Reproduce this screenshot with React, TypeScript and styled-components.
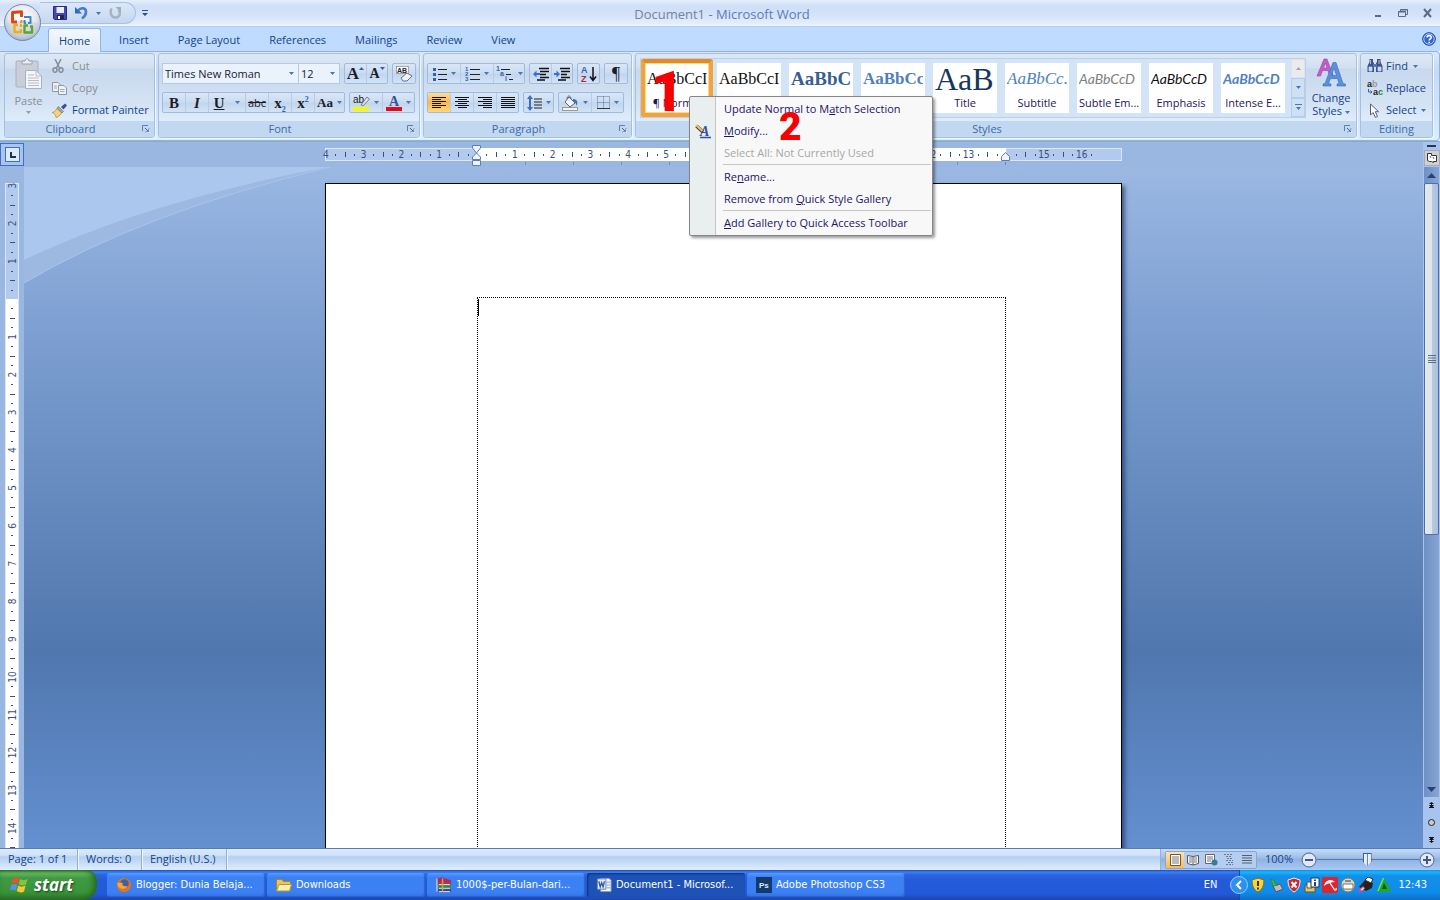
import React from "react";
import styled, { createGlobalStyle, css } from "styled-components";

const UI = '"Open Sans", "Noto Sans", sans-serif';
const TAHOMA = '"DejaVu Sans Condensed", "DejaVu Sans", sans-serif';
const NAVY = "#15428b";

const GlobalStyle = createGlobalStyle`
  * { box-sizing: border-box; }
  body { margin: 0; }
  button, select, input { font: inherit; color: inherit; margin: 0; padding: 0; border: 0; background: none; }
  svg { display: block; flex: none; }
`;

const Shell = styled.div`
  display: flex;
  flex-direction: column;
  height: 100vh;
  overflow: hidden;
  font: 11px/16px ${UI};
  color: ${NAVY};
`;

/* ---------- title bar ---------- */
const TitleBar = styled.header`
  position: relative;
  display: flex;
  align-items: center;
  height: 27px;
  flex: none;
  border-bottom: 1px solid #b0cff7;
  background: linear-gradient(#e6effc 0, #cfdff6 6px, #d3e2f8 14px, #e4eefc 24px, #f0f6ff 25px);
`;
const OfficeButton = styled.button`
  position: absolute;
  left: 3px;
  top: 3px;
  z-index: 3;
`;
const QuickAccess = styled.div`
  display: flex;
  align-items: center;
  gap: 8px;
  height: 22px;
  margin-left: 40px;
  padding: 0 13px;
  border: 1px solid #a9c1e4;
  border-left: 0;
  border-radius: 0 12px 12px 0;
  background: linear-gradient(#dce8f9, #c4d7f1);
`;
const PlainButton = styled.button`
  display: flex;
  align-items: center;
  justify-content: center;
`;
const Customize = styled(PlainButton)`
  margin-left: 6px;
`;
const Title = styled.h1`
  position: absolute;
  inset: 4px 0 auto 4px;
  margin: 0;
  text-align: center;
  font: 13px/20px ${UI};
  color: #5a7cb5;
  pointer-events: none;
  span { color: #76829b; }
`;
const WindowButtons = styled.div`
  display: flex;
  gap: 13px;
  margin-left: auto;
  padding-right: 6px;
`;

/* ---------- tabs ---------- */
const TabRow = styled.nav`
  display: flex;
  align-items: flex-end;
  gap: 7px;
  height: 24px;
  flex: none;
  padding: 0 4px 0 48px;
  background: #bfdbff;
`;
const Tab = styled.button<{ $on?: boolean }>`
  height: 23px;
  padding: 0 10px;
  border: 1px solid transparent;
  border-bottom: 0;
  border-radius: 3px 3px 0 0;
  ${(p) =>
    p.$on &&
    css`
      border-color: #8db2e3;
      background: linear-gradient(#f3f8ff, #dfeaf8);
      box-shadow: 0 0 2px #fff inset;
      position: relative;
      height: 24px;
      margin-bottom: -1px;
    `}
`;
const Help = styled(PlainButton)`
  margin-left: auto;
  align-self: center;
`;

/* ---------- ribbon ---------- */
const Ribbon = styled.div`
  display: flex;
  gap: 3px;
  height: 90px;
  flex: none;
  padding: 1px 6px 2px 4px;
  border: 1px solid #8db2e3;
  border-width: 1px 1px 1px 0;
  border-top-color: #8fb1e6;
  border-bottom-color: #90b4dd;
  border-radius: 0 4px 4px 0;
  background: linear-gradient(#dbe6f4, #c7daf0 20px, #d9e9fb 76px, #d5f0fb);
`;
const Group = styled.section<{ $w?: number }>`
  display: flex;
  flex-direction: column;
  min-width: 0;
  flex: ${(p) => (p.$w ? `0 0 ${p.$w}px` : "1 1 0")};
  position: relative;
  border: 1px solid #a5c0e0;
  border-radius: 3px;
  background: linear-gradient(#dde8f5 0, #d3e0f0 14px, #c8d8ed 15px, #d4e3f4 50px, #dfecfb 68px);
  box-shadow: 1px 1px 0 #eef6ff;
`;
const GroupBody = styled.div`
  flex: 1;
  display: flex;
  min-height: 0;
`;
const GroupLabel = styled.div`
  display: flex;
  align-items: center;
  height: 16px;
  padding: 0 4px;
  background: #c1d8f0;
  border-radius: 0 0 3px 3px;
  color: #3e6aaa;
  span { flex: 1; text-align: center; }
  button { margin-left: 10px; }
`;
const BigButton = styled.button<{ $w: number; $off?: boolean }>`
  display: flex;
  flex-direction: column;
  align-items: center;
  width: ${(p) => p.$w}px;
  line-height: 13px;
  padding-top: 4px;
  gap: 4px;
  color: ${(p) => (p.$off ? "#8d8d8d" : NAVY)};
`;
const Caption = styled.span`
  svg { display: inline-block; vertical-align: middle; }
`;
const Stack = styled.div<{ $pad?: number }>`
  display: flex;
  flex-direction: column;
  padding: 1px 0 0 ${(p) => p.$pad ?? 0}px;
`;
const RowButton = styled.button<{ $off?: boolean; $icon: number }>`
  display: grid;
  grid-template-columns: ${(p) => p.$icon}px auto auto;
  align-items: center;
  justify-content: start;
  height: 22px;
  color: ${(p) => (p.$off ? "#8d8d8d" : NAVY)};
  svg + svg { margin-left: 5px; }
`;
const Rows = styled.div`
  display: flex;
  flex-direction: column;
  gap: 8px;
  padding: 9px 3px 0;
`;
const Row = styled.div`
  display: flex;
  gap: 4px;
`;
const Cluster = styled.div`
  display: flex;
  height: 21px;
  border: 1px solid #9ebbe0;
  border-radius: 2px;
  background: linear-gradient(#d9e6f6, #cbdcf1 9px, #c0d5ee 10px, #d3e3f6);
`;
const Tool = styled.button<{ $w?: number; $on?: boolean }>`
  display: flex;
  align-items: center;
  justify-content: center;
  gap: 4px;
  width: ${(p) => p.$w ?? 21}px;
  & + & { border-left: 1px solid #b5cbe8; }
  ${(p) => p.$on && "background: linear-gradient(#fddc9c, #fbb453 9px, #fdd878);"}
`;
const Glyph = styled.span<{ $size?: number; $bold?: boolean; $italic?: boolean; $line?: string; $sans?: boolean }>`
  font-family: ${(p) => (p.$sans ? UI : '"Liberation Serif", serif')};
  font-size: ${(p) => p.$size ?? 15}px;
  line-height: 16px;
  font-weight: ${(p) => (p.$bold ? 700 : 400)};
  font-style: ${(p) => (p.$italic ? "italic" : "normal")};
  text-decoration: ${(p) => p.$line ?? "none"};
  color: #1c1c28;
  sub, sup { font-size: 8px; line-height: 0; color: #2f5fb5; }
`;
const SizeTool = styled(Tool)`
  gap: 0;
  svg { align-self: flex-start; margin-top: 3px; }
`;
const Combo = styled.label<{ $w: number }>`
  display: flex;
  align-items: center;
  width: ${(p) => p.$w}px;
  height: 21px;
  padding: 0 4px 0 2px;
  border: 1px solid #b3c9e6;
  background: #eaf2fb;
  color: #1a1a3a;
  & + & { margin-left: -5px; }
  select { flex: 1; min-width: 0; appearance: none; outline: 0; }
`;

/* ---------- style gallery ---------- */
const Gallery = styled.div`
  display: flex;
  flex: 1;
  min-width: 0;
  height: 60px;
  margin: 4px 0 0 4px;
  border: 1px solid #b9d0ed;
  background: #d4e4f7;
`;
const Cells = styled.div`
  display: flex;
  flex: 1;
  min-width: 0;
  overflow: hidden;
`;
const Cell = styled.button<{ $on?: boolean }>`
  flex: 0 0 72px;
  min-width: 0;
  height: 58px;
  border: 4px solid transparent;
  background: #fff padding-box;
  padding: 0 2px;
  color: #1d1560;
  ${(p) =>
    p.$on &&
    css`
      border: 4px solid #f2a33c;
      border-top-color: #e28a25;
      border-radius: 3px;
      box-shadow: 0 0 0 1px #ffd98a inset;
    `}
`;
const Sample = styled.span<{ $font: string; $color: string }>`
  display: flex;
  align-items: center;
  height: 30px;
  overflow: hidden;
  white-space: nowrap;
  font: ${(p) => p.$font};
  color: ${(p) => p.$color};
`;
const CellName = styled.span`
  display: block;
  line-height: 18px;
  white-space: nowrap;
  text-align: center;
`;
const GalleryScroll = styled.div`
  display: flex;
  flex-direction: column;
  width: 14px;
  button { flex: 1; display: grid; place-items: center; border: 1px solid #b5cdec; background: #cfe0f5; }
  button:first-child { background: #e9ebef; border-color: #dfe3ea; }
`;

/* ---------- context menu ---------- */
const Menu = styled.div`
  position: absolute;
  left: 53px;
  top: 42px;
  z-index: 5;
  width: 244px;
  padding: 1px 1px 1px 0;
  border: 1px solid #868686;
  border-radius: 2px;
  background: linear-gradient(90deg, #e9eeee 25px, #c5c5c5 25px, #c5c5c5 26px, #f8f8f8 26px);
  box-shadow: 2px 2px 3px rgba(0, 0, 0, 0.4);
`;
const MenuItem = styled.button<{ $off?: boolean }>`
  display: grid;
  grid-template-columns: 34px auto;
  align-items: center;
  justify-content: start;
  width: 100%;
  height: 22px;
  text-align: left;
  white-space: nowrap;
  color: ${(p) => (p.$off ? "#a7a7a7" : "#1c1468")};
  svg { margin-left: 4px; }
  > span { grid-column: 2; }
  > svg { grid-row: 1; }
`;
const MenuLine = styled.hr`
  margin: 0 0 1px 33px;
  border: 0;
  border-top: 1px solid #c5c5c5;
`;
const Marker = styled.span<{ $x: number; $y: number; $size: number }>`
  position: absolute;
  left: ${(p) => p.$x}px;
  top: ${(p) => p.$y}px;
  z-index: 6;
  font: 900 ${(p) => p.$size}px/1 Roboto, sans-serif;
  color: #f80000;
  pointer-events: none;
`;

/* ---------- workspace ---------- */
const Workspace = styled.main`
  flex: 1;
  min-height: 0;
  display: grid;
  grid-template: 25px minmax(0, 1fr) / 24px minmax(0, 1fr) 17px;
  border-top: 1px solid #8aaacb;
  background: #9ab7e1;
`;
const Corner = styled.div`
  display: grid;
  place-items: center;
  padding: 1px 0;
`;
const TopRuler = styled.div`
  display: flex;
  justify-content: center;
  padding-top: 2px;
  overflow: hidden;
`;
const SideRuler = styled.div`
  overflow: hidden;
  padding-left: 5px;
`;
const Desk = styled.div`
  position: relative;
  display: flex;
  justify-content: center;
  padding-top: 16px;
  overflow: hidden;
  background: linear-gradient(#9bb8e3, #7d9fd1 24%, #5077ae 71%, #6490d0 100%);
`;
const Swoosh = styled.svg`
  position: absolute;
  left: 0;
  top: 0;
`;
const Page = styled.article`
  position: relative;
  flex: 0 0 797px;
  min-height: 1120px;
  padding: 113px 115px 0 151px;
  border: 1px solid #000;
  background: #fff;
  box-shadow: 3px 3px 4px rgba(20, 40, 80, 0.6);
`;
const TextArea = styled.div`
  height: 930px;
  padding-top: 1px;
  border: 1px dotted #000;
`;
const Caret = styled.span`
  display: block;
  width: 1px;
  height: 17px;
  background: #000;
`;
const ScrollColumn = styled.div`
  grid-column: 3;
  grid-row: 1 / 3;
  display: flex;
  flex-direction: column;
  align-items: center;
  padding-top: 3px;
  background: #a8c3ee;
`;
const SplitHandle = styled.div`
  width: 9px;
  height: 2px;
  background: #27375c;
`;
const RulerToggle = styled(PlainButton)`
  width: 16px;
  height: 16px;
  margin-top: 3px;
  border: 1px solid #aaa;
  background: #cfd0d4;
`;
const Track = styled.div`
  flex: 1;
  min-height: 0;
  display: flex;
  flex-direction: column;
  width: 15px;
  margin-top: 1px;
  background: linear-gradient(90deg, #6f90c3, #86a5d5);
`;
const Arrow = styled(PlainButton)`
  height: 16px;
  flex: none;
`;
const Thumb = styled.div`
  display: grid;
  place-items: center;
  flex: 0 1 352px;
  border: 1px solid #4f6da6;
  border-radius: 2px;
  background: linear-gradient(90deg, #e3eaef, #dde5ea 50%, #b9cae0 55%, #a9bfe0);
`;
const Spacer = styled.div`
  flex: 1;
`;
const Browse = styled.div`
  display: flex;
  flex-direction: column;
  justify-content: space-around;
  height: 51px;
  flex: none;
`;

/* ---------- status bar ---------- */
const StatusBar = styled.footer`
  display: flex;
  height: 22px;
  flex: none;
  border-top: 1px solid #567db1;
  background: linear-gradient(#dcebfc 0, #cfe1f8 6px, #b5d0f2 8px, #cbdff6 15px, #dfeefd 21px);
`;
const StatusItem = styled.button<{ $w: number }>`
  width: ${(p) => p.$w}px;
  padding: 0 0 2px 8px;
  text-align: left;
  white-space: nowrap;
  border-right: 1px solid #92afd4;
  box-shadow: 1px 0 0 #eaf3fe;
`;
const ZoomPart = styled.div`
  display: flex;
  align-items: center;
  gap: 8px;
  margin-left: auto;
  padding: 0 5px 0 4px;
  border-left: 1px solid #92afd4;
  background: linear-gradient(#c6dbf8, #9dbde8 9px, #8fb2e2 10px, #abc9f2);
`;
const Views = styled.div`
  display: flex;
  height: 18px;
  border: 1px solid #87a5d0;
  border-radius: 2px;
  background: #b5cdee;
`;
const ViewButton = styled(PlainButton)<{ $on?: boolean }>`
  width: 18px;
  ${(p) => p.$on && "background: linear-gradient(#fde3ae, #fbb854);"}
`;
const Percent = styled.button`
  width: 28px;
  padding-bottom: 2px;
  white-space: nowrap;
`;
const ZoomSlider = styled.div`
  display: flex;
  align-items: center;
  input {
    width: 102px;
    height: 14px;
    appearance: none;
    background: linear-gradient(#5878aa, #5878aa) center / 100% 1px no-repeat;
  }
  input::-webkit-slider-thumb {
    appearance: none;
    width: 9px;
    height: 13px;
    background: linear-gradient(90deg, #3f5f95 1px, #f2f6fc 1px, #dbe5f3 4px, #6a86b3 4px, #6a86b3 5px, #f2f6fc 5px, #dbe5f3 8px, #3f5f95 8px);
    border-top: 1px solid #3f5f95;
    clip-path: polygon(0 0, 100% 0, 100% 65%, 50% 100%, 0 65%);
  }
`;

/* ---------- taskbar ---------- */
const Taskbar = styled.div`
  display: flex;
  height: 30px;
  flex: none;
  font: 11px/16px ${TAHOMA};
  color: #fff;
  background: linear-gradient(#1f48b8 0, #3c81f0 2px, #2a63e0 5px, #245bdb 10px, #2259d8 24px, #1c46ab 30px);
`;
const Start = styled.button`
  display: flex;
  align-items: center;
  gap: 5px;
  width: 97px;
  padding-left: 10px;
  border-radius: 0 10px 14px 0;
  font: italic 700 17px/24px "Open Sans", sans-serif;
  color: #fff;
  text-shadow: 1px 1px 2px #1c441c;
  background: linear-gradient(#2f7d2f 0, #6bbd66 3px, #419a41 8px, #3a953a 22px, #2a742a 30px);
  box-shadow: -3px 0 6px #1f661f inset;
`;
const Tasks = styled.div`
  display: flex;
  flex: 1;
  min-width: 0;
  gap: 2px;
  padding: 3px 0 3px 10px;
`;
const Task = styled.button<{ $on?: boolean }>`
  display: flex;
  align-items: center;
  gap: 4px;
  flex: 0 1 158px;
  min-width: 0;
  padding: 0 9px;
  white-space: nowrap;
  overflow: hidden;
  border-radius: 3px;
  background: ${(p) => (p.$on ? "#1e52b7" : "linear-gradient(#5a9afc, #3c81f3 4px, #3c81f3 18px, #3575e6)")};
  box-shadow: ${(p) => (p.$on ? "1px 1px 2px #10316f inset" : "-1px -1px 1px #2a62cf inset")};
`;
const Lang = styled.button`
  width: 42px;
  text-align: center;
`;
const Tray = styled.div`
  display: flex;
  align-items: center;
  gap: 2px;
  margin-left: 8px;
  padding-right: 13px;
  border-left: 1px solid #0a4fa8;
  background: linear-gradient(#0c8dea 0, #1cb4f8 2px, #1290e8 6px, #0f8cea 22px, #0d6fc8 30px);
  button { margin-left: -10px; }
  time { margin-left: 4px; }
`;

/* ---------- icons ---------- */
const Drop = ({ up }: { up?: boolean }) => (
  <svg width="5" height="3" viewBox="0 0 5 3">
    <path d={up ? "M0 3L2.5 0L5 3Z" : "M0 0H5L2.5 3Z"} fill={up ? "#a0a5ad" : "#4a74b4"} />
  </svg>
);
const SizeArrow = ({ down }: { down?: boolean }) => (
  <svg width="5" height="3" viewBox="0 0 5 3">
    <path d={down ? "M0 0H5L2.5 3Z" : "M0 3L2.5 0L5 3Z"} fill="#2f5fb5" />
  </svg>
);
const Launcher = () => (
  <PlainButton aria-label="Open dialog">
    <svg width="8" height="8" viewBox="0 0 8 8" fill="none" stroke="#5a7fb5">
      <path d="M.5 6V.5H6" />
      <path d="M3 3L6 6M7 3.5V7H3.5" stroke="#3f6297" />
      <path d="M4 7.5H7.5V4" stroke="#fff" strokeWidth=".6" />
    </svg>
  </PlainButton>
);
const OfficeLogo = () => (
  <svg width="39" height="39" viewBox="0 0 39 39">
    <defs>
      <radialGradient id="orb" cx=".5" cy=".35" r=".65">
        <stop offset="0" stopColor="#fff" />
        <stop offset=".6" stopColor="#e3e7ee" />
        <stop offset="1" stopColor="#a5b2c8" />
      </radialGradient>
    </defs>
    <circle cx="19.500" cy="19.500" r="18" fill="url(#orb)" stroke="#7488ac" />
    <path d="M2 21a18 18 0 0 0 35 0C28 17 11 17 2 21Z" fill="#c3cddd" opacity=".5" />
    <g fill="none" strokeLinejoin="round">
      <path d="M14 19H9.500V9.500L18.500 8.800V14" stroke="#d9470f" strokeWidth="2.900" />
      <path d="M17 19H18.500V17" stroke="#f08a3a" strokeWidth="2" />
      <path d="M21 14H27.500V20H25M23 20H21.500V17" stroke="#3a86cc" strokeWidth="2" />
      <path d="M15 22H11.500V29H18V26M18 24V22H17" stroke="#f0ad12" strokeWidth="2.300" />
      <path d="M25 22.500H21.500V29.500H29V23.500H27" stroke="#5da52c" strokeWidth="2.400" />
    </g>
  </svg>
);
const Save = () => (
  <svg width="14" height="14" viewBox="0 0 14 14">
    <path d="M.5.5H13.500V13.500H1.500L.5 12.500Z" fill="#4747b0" stroke="#2a2a80" />
    <path d="M3.500 1H11V7H3.500Z" fill="#e9edfb" />
    <path d="M4 9H11V13H4Z" fill="#22225e" />
    <path d="M5 10H7V13H5Z" fill="#fff" />
  </svg>
);
const Undo = () => (
  <svg width="13" height="14" viewBox="0 0 13 14" fill="none">
    <path d="M0 1V7.500H7Z" fill="#3567c8" />
    <path d="M3 4.500C6 1 11 1.500 11 6C11 9 9 11 7 12.500" stroke="#4a78d2" strokeWidth="2.600" />
  </svg>
);
const Redo = () => (
  <svg width="13" height="14" viewBox="0 0 13 14" fill="none">
    <path d="M2.500 2.500C.5 7 2.500 11.500 6.500 11.500C11 11.500 12 7 9.500 4" stroke="#a9b1be" strokeWidth="2.400" />
    <path d="M6.500 1H12V6.500Z" fill="#a4acba" />
  </svg>
);
const HelpIcon = () => (
  <svg width="14" height="14" viewBox="0 0 14 14">
    <circle cx="7" cy="7" r="6.300" fill="#2f63d0" stroke="#17439e" />
    <circle cx="7" cy="7" r="5.200" fill="none" stroke="#dbe8ff" strokeWidth=".8" />
    <path d="M5 5.500C5 3 9.200 3 9.200 5.500C9.200 7 7.200 6.900 7.200 8.500M7.200 9.700V11" stroke="#fff" strokeWidth="1.600" fill="none" />
  </svg>
);
const PasteIcon = () => (
  <svg width="28" height="32" viewBox="0 0 28 32">
    <rect x="1" y="3" width="22" height="26" rx="1" fill="#c9cfd9" stroke="#aab2c0" />
    <path d="M7 5V3H10C10 0 14 0 14 3H17V6H7Z" fill="#e9ecf1" stroke="#9aa2b0" />
    <path d="M10.500 12.500H21L26.500 18V30.500H10.500Z" fill="#f3f5f9" stroke="#a8b1c2" />
    <path d="M21 12.500V18H26.500M13 17H19M13 20H24M13 22.500H24M13 25H24M13 27.500H24" stroke="#b5bdcb" fill="none" />
  </svg>
);
const CutIcon = () => (
  <svg width="12" height="14" viewBox="0 0 12 14" fill="none" stroke="#868c98" strokeWidth="1.500">
    <path d="M3 0L7.500 9M9 0L4.500 9" />
    <ellipse cx="3" cy="11" rx="2" ry="2.300" />
    <ellipse cx="9" cy="11" rx="2" ry="2.300" />
  </svg>
);
const CopyIcon = () => (
  <svg width="15" height="13" viewBox="0 0 15 13" fill="#eef1f6" stroke="#8f97a6">
    <path d="M.5.5H6L8.500 3V9.500H.5Z" />
    <path d="M6.500 3.500H12L14.500 6V12.500H6.500Z" />
    <path d="M2 4H5M2 6H5M8 7.500H12.500M8 9.500H12.500" strokeWidth=".8" />
  </svg>
);
const BrushIcon = () => (
  <svg width="15" height="15" viewBox="0 0 15 15">
    <path d="M9 4L13 .5L15 2.500L11.500 6.500Z" fill="#3f4f93" />
    <path d="M6.500 3.500L11.500 8.500L10 10L5 5Z" fill="#9da8be" stroke="#5c6887" strokeWidth=".6" />
    <path d="M5 5.500L9.500 10C8 13 5.500 14 4 14.500C4 12 2 10 0 9.500C2.500 9 4 7.500 5 5.500Z" fill="#f4d27a" stroke="#b38a32" strokeWidth=".7" />
  </svg>
);
const ClearIcon = () => (
  <svg width="17" height="16" viewBox="0 0 17 16">
    <rect x=".5" y=".5" width="12" height="7" fill="#fff" stroke="#777" strokeWidth=".6" />
    <text x="1" y="7" fontSize="7" fontFamily="Liberation Sans, sans-serif" fontWeight="700" fill="#222">AB</text>
    <path d="M5 12L11 7L16 10L11 15H7Z" fill="#f4f0f8" stroke="#66708a" />
  </svg>
);
const HighlightIcon = () => (
  <svg width="17" height="16" viewBox="0 0 17 16">
    <rect x="0" y="12" width="16" height="4" fill="#f8f800" />
    <text x="0" y="8" fontSize="10" fontFamily="Liberation Sans, sans-serif" fill="#222">ab</text>
    <path d="M8 10L14 2L16.500 4L10.500 10.500Z" fill="#dfe5ee" stroke="#5a6478" strokeWidth=".8" />
  </svg>
);
const FontColorIcon = () => (
  <svg width="16" height="16" viewBox="0 0 16 16">
    <rect x="0" y="12" width="16" height="4" fill="#e00b18" />
    <text x="3" y="11" fontSize="14" fontFamily="Liberation Serif, serif" fontWeight="700" fill="#2f559c">A</text>
  </svg>
);
const BulletsIcon = () => (
  <svg width="14" height="14" viewBox="0 0 14 14">
    <path d="M0 1h3v3H0zM0 6h3v3H0zM0 11h3v3H0z" fill="#3a5fa8" />
    <path d="M5 2.500H14M5 7.500H14M5 12.500H14" stroke="#222" />
  </svg>
);
const NumbersIcon = () => (
  <svg width="15" height="16" viewBox="0 0 15 16">
    <g fontSize="6" fontWeight="700" fontFamily="Liberation Sans, sans-serif" fill="#3a5fa8">
      <text x="0" y="5">1</text>
      <text x="0" y="10">2</text>
      <text x="0" y="15">3</text>
    </g>
    <path d="M5 3.500H15M5 8.500H15M5 13.500H15" stroke="#222" />
  </svg>
);
const LevelsIcon = () => (
  <svg width="18" height="16" viewBox="0 0 18 16">
    <g fontSize="7" fontWeight="700" fontFamily="Liberation Sans, sans-serif" fill="#3a5fa8">
      <text x="0" y="5">1</text>
      <text x="4" y="10">a</text>
      <text x="9" y="15">i</text>
    </g>
    <path d="M5 3.500H14M10 8.500H15M13 13.500H17" stroke="#222" />
  </svg>
);
const IndentIcon = ({ right }: { right?: boolean }) => (
  <svg width="16" height="14" viewBox="0 0 16 14">
    <path d="M6 1.500H16M7 4.500H16M7 7.500H13M7 10.500H16M4 13H12" stroke="#111" strokeWidth="1.500" />
    <path d={right ? "M6 7L2.500 3.500V6H0V8H2.500V10.500Z" : "M0 7L3.500 3.500V6H7V8H3.500V10.500Z"} fill="#3a6fd0" />
  </svg>
);
const SortIcon = () => (
  <svg width="16" height="16" viewBox="0 0 16 16">
    <text x="0" y="7" fontSize="9" fontWeight="700" fontFamily="Liberation Sans, sans-serif" fill="#3a5fb0">A</text>
    <text x="0" y="16" fontSize="9" fontWeight="700" fontFamily="Liberation Sans, sans-serif" fill="#a03030">Z</text>
    <path d="M12 1V14M9 10.500L12 14.500L15 10.500" stroke="#111" strokeWidth="1.500" fill="none" />
  </svg>
);
const AlignIcon = ({ kind }: { kind: "l" | "c" | "r" | "j" }) => {
  const short = kind === "j" ? 14 : 9;
  const x = kind === "c" ? 3 : kind === "r" ? 5 : 0;
  return (
    <svg width="14" height="11" viewBox="0 0 14 11" shapeRendering="crispEdges" fill="#111">
      {[0, 2, 4, 6, 8, 10].map((y, i) => (
        <rect key={y} x={i % 2 ? x : 0} y={y} width={i % 2 ? short : 14} height="1" />
      ))}
    </svg>
  );
};
const SpacingIcon = () => (
  <svg width="15" height="16" viewBox="0 0 15 16">
    <path d="M3 0L6 4H4V12H6L3 16L0 12H2V4H0Z" fill="#3a6fc0" />
    <path d="M7 4H15M7 7H15M7 10H15M7 13H15" stroke="#222" />
  </svg>
);
const BucketIcon = () => (
  <svg width="17" height="16" viewBox="0 0 17 16">
    <rect x=".5" y="12.500" width="15" height="3" fill="#eef3fa" stroke="#9a9a8a" />
    <path d="M7 2L13 8L8 12L3 7Z" fill="#f0f3f8" stroke="#5a6478" />
    <path d="M5 4C5 0 9 0 9 4" fill="none" stroke="#5a6478" />
    <path d="M11 4C16 4 16 8 14.500 11C14 8 13 7 11 6Z" fill="#3f6fb5" />
  </svg>
);
const BordersIcon = () => (
  <svg width="13" height="13" viewBox="0 0 13 13" fill="none">
    <path d="M.5.5H12.500V12.500M.5.5V12.500M6.500.5V12.500M.5 6.500H12.500" stroke="#5d7090" strokeDasharray="1 1" />
    <path d="M0 12.500H13" stroke="#333" />
  </svg>
);
const ChangeStylesIcon = () => (
  <svg width="30" height="29" viewBox="0 0 30 29">
    <path d="M1 18L8 1H11L17 17H13.500L12 12.500H6.500L4.500 18ZM7.500 10H11L9.400 5Z" fill="#c25fc6" stroke="#98419e" strokeWidth=".6" />
    <path fillRule="evenodd" d="M7 27.500V26L9 25.500L17 4.500H20L27 25.500L29.500 26V28H21V26L23 25.500L21.500 20.500H14.500L12.500 25.500L15 26V28H7ZM15.500 17.500H20.500L18 10Z" fill="#5a91dc" stroke="#356ab3" strokeWidth=".6" />
  </svg>
);
const FindIcon = () => (
  <svg width="16" height="14" viewBox="0 0 16 14">
    <path d="M2.500 0H6V3L7 4V13H.5V7L2.500 3ZM10 0H13.500V3L15.500 7V13H9V4L10 3Z" fill="#3a5290" />
    <path d="M6 5H10V8H6Z" fill="#5a74b0" />
    <path d="M2 8H5V12H2ZM11 8H14V12H11ZM3.500 1V5M12 1V5" fill="#c9d7f2" stroke="#c9d7f2" strokeWidth=".8" />
  </svg>
);
const ReplaceIcon = () => (
  <svg width="16" height="16" viewBox="0 0 16 16">
    <g fontSize="9" fontWeight="700" fontFamily="Liberation Sans, sans-serif">
      <text x="0" y="7" fill="#222">a<tspan fill="#999">b</tspan></text>
      <text x="6" y="15" fill="#222">a<tspan fill="#1c8a2c">c</tspan></text>
    </g>
    <path d="M1.500 9V12H4.500M3.500 10.500L5 12L3.500 13.500" stroke="#3a5fb0" fill="none" />
  </svg>
);
const SelectIcon = () => (
  <svg width="16" height="15" viewBox="0 0 16 15">
    <path d="M3.500 1V12L6 9.500L8.500 14.500L10.500 13.500L8.300 8.700H11.500Z" fill="#fff" stroke="#555c74" />
  </svg>
);
const ModifyIcon = () => (
  <svg width="18" height="16" viewBox="0 0 18 16">
    <text x="6" y="13" fontSize="14" fontStyle="italic" fontWeight="700" fontFamily="Liberation Serif, serif" fill="#2f4fae">A</text>
    <path d="M6 14.500H17" stroke="#2f4fae" strokeWidth="1.500" />
    <path d="M2.500 3L9 9" stroke="#54432d" strokeWidth="3.600" />
    <path d="M2 2L8.500 8" stroke="#ecc07c" strokeWidth="2.200" />
  </svg>
);

const CM = 37.8;
const numbers = (from: number, to: number) => Array.from({ length: to - from + 1 }, (_, i) => from + i);

const HorizontalRuler = () => {
  const zero = 152;
  return (
    <svg width="797" height="22" viewBox="0 0 797 22" overflow="visible">
      <rect x=".5" y="4.500" width="796" height="12" fill="#b1caee" stroke="#dbe8fb" />
      <rect x={zero} y="4" width={14 * CM} height="13" fill="#fff" />
      {numbers(-4, 16).map((n) => (
        <g key={n} fill="#3c4f78">
          {n !== 0 && n !== 14 && (
            <text x={zero + n * CM} y="14" fontSize="10" textAnchor="middle" fontFamily={TAHOMA}>{Math.abs(n)}</text>
          )}
          <rect x={Math.round(zero + (n + 0.25) * CM)} y="10" width="1" height="2" />
          {n < 16 && <rect x={Math.round(zero + (n + 0.5) * CM)} y="8" width="1" height="5" />}
          <rect x={Math.round(zero + (n + 0.75) * CM)} y="10" width={n < 16 ? 1 : 0} height="2" />
        </g>
      ))}
      {numbers(1, 11).map((n) => (
        <rect key={n} x={zero + n * 48} y="18" width="1" height="3" fill="#6f8cba" />
      ))}
      <g fill="#f1f5fb" stroke="#5b7fbd">
        <path d="M147.500 1.500H155.500V4L151.500 9L147.500 4Z" />
        <path d="M151.500 9L155.500 13V15.500H147.500V13Z" />
        <path d="M147.500 16.500H155.500V21.500H147.500Z" />
        <path d="M680.500 8.500L684.500 12.500V16.500H676.500V12.500Z" />
      </g>
    </svg>
  );
};

const VerticalRuler = () => {
  const zero = 132;
  return (
    <svg width="14" height="100%" overflow="visible">
      <rect x=".5" y="16.500" width="13" height="900" fill="#b1caee" stroke="#dbe8fb" />
      <rect x="1" y={zero} width="12" height="900" fill="#fff" />
      {numbers(-3, 16).map((n) => (
        <g key={n} fill="#3c4f78">
          {n !== 0 && (
            <text transform={`translate(11 ${zero + n * CM}) rotate(-90)`} fontSize="10" textAnchor="middle" fontFamily={TAHOMA}>{Math.abs(n)}</text>
          )}
          <rect x="6" y={Math.round(zero + (n + 0.25) * CM)} width="2" height="1" />
          <rect x="5" y={Math.round(zero + (n + 0.5) * CM)} width="5" height="1" />
          <rect x="6" y={Math.round(zero + (n + 0.75) * CM)} width="2" height="1" />
        </g>
      ))}
    </svg>
  );
};

const SERIF = '"Liberation Serif", serif';
const STYLES = [
  { name: "¶ Normal", text: "AaBbCcI", font: `16px/30px ${SERIF}`, color: "#111" },
  { name: "¶ No Spac...", text: "AaBbCcI", font: `16px/30px ${SERIF}`, color: "#111" },
  { name: "Heading 1", text: "AaBbCc", font: `700 19px/30px ${SERIF}`, color: "#365f91" },
  { name: "Heading 2", text: "AaBbCc", font: `700 17px/30px ${SERIF}`, color: "#4f81bd" },
  { name: "Title", text: "AaB", font: `32px/30px ${SERIF}`, color: "#17365d" },
  { name: "Subtitle", text: "AaBbCc.", font: `italic 17px/30px ${SERIF}`, color: "#4f81bd" },
  { name: "Subtle Em...", text: "AaBbCcD", font: "italic 14px/30px Lato, sans-serif", color: "#808080" },
  { name: "Emphasis", text: "AaBbCcD", font: "italic 14px/30px Lato, sans-serif", color: "#111" },
  { name: "Intense E...", text: "AaBbCcD", font: "italic 700 14px/30px Lato, sans-serif", color: "#4f81bd" },
];

const ContextMenu = () => (
  <Menu role="menu">
    <MenuItem><span>Update Normal to M<u>a</u>tch Selection</span></MenuItem>
    <MenuItem><ModifyIcon /><span><u>M</u>odify...</span></MenuItem>
    <MenuItem $off><span>Select All: Not Currently Used</span></MenuItem>
    <MenuLine />
    <MenuItem><span>Re<u>n</u>ame...</span></MenuItem>
    <MenuItem><span>Remove from <u>Q</u>uick Style Gallery</span></MenuItem>
    <MenuLine />
    <MenuItem><span><u>A</u>dd Gallery to Quick Access Toolbar</span></MenuItem>
  </Menu>
);

const PageArrow = ({ down }: { down?: boolean }) => (
  <PlainButton aria-label={down ? "Next page" : "Previous page"}>
    <svg width="5" height="6" viewBox="0 0 5 6">
      <path d={down ? "M0 0H5V1H3.500L5 3H3V4H5L2.500 6L0 4H2V3H0L1.500 1H0Z" : "M2.500 0L5 2H3V3H5L3.500 5H5V6H0V5H1.500L0 3H2V2H0Z"} fill="#111" />
    </svg>
  </PlainButton>
);

export default function App() {
  return (
    <Shell>
      <GlobalStyle />
      <TitleBar>
        <OfficeButton aria-label="Office menu"><OfficeLogo /></OfficeButton>
        <QuickAccess>
          <PlainButton aria-label="Save"><Save /></PlainButton>
          <PlainButton aria-label="Undo"><Undo /></PlainButton>
          <PlainButton aria-label="Undo list"><Drop /></PlainButton>
          <PlainButton aria-label="Redo"><Redo /></PlainButton>
        </QuickAccess>
        <Customize aria-label="Customize toolbar">
          <svg width="6" height="6" viewBox="0 0 6 6"><path d="M0 0H6V1H0ZM0 3H6L3 6Z" fill="#2f4f8a" /></svg>
        </Customize>
        <Title><span>Document1</span> - Microsoft Word</Title>
        <WindowButtons>
          <PlainButton aria-label="Minimize"><svg width="12" height="10" viewBox="0 0 12 10"><path d="M3 8H9" stroke="#5b6b85" strokeWidth="2" /></svg></PlainButton>
          <PlainButton aria-label="Restore"><svg width="12" height="10" viewBox="0 0 12 10" fill="none" stroke="#5b6b85"><path d="M3.500 3V1.500H10.500V6.500H8M1.500 3.500H8.500V8.500H1.500ZM1.500 4H8.500M3.500 2H10.500" /></svg></PlainButton>
          <PlainButton aria-label="Close"><svg width="12" height="10" viewBox="0 0 12 10"><path d="M2 1L9 9M9 1L2 9" stroke="#5b6b85" strokeWidth="2" /></svg></PlainButton>
        </WindowButtons>
      </TitleBar>

      <TabRow>
        <Tab $on>Home</Tab>
        <Tab>Insert</Tab>
        <Tab>Page Layout</Tab>
        <Tab>References</Tab>
        <Tab>Mailings</Tab>
        <Tab>Review</Tab>
        <Tab>View</Tab>
        <Help aria-label="Help"><HelpIcon /></Help>
      </TabRow>

      <Ribbon>
        <Group $w={151}>
          <GroupBody>
            <BigButton $w={47} $off><PasteIcon />Paste<svg width="5" height="3"><path d="M0 0H5L2.500 3Z" fill="#9a9a9a" /></svg></BigButton>
            <Stack>
              <RowButton $off $icon={20}><CutIcon />Cut</RowButton>
              <RowButton $off $icon={20}><CopyIcon />Copy</RowButton>
              <RowButton $icon={20}><BrushIcon />Format Painter</RowButton>
            </Stack>
          </GroupBody>
          <GroupLabel><span>Clipboard</span><Launcher /></GroupLabel>
        </Group>

        <Group $w={262}>
          <GroupBody>
            <Rows>
              <Row>
                <Combo $w={137}><select aria-label="Font"><option>Times New Roman</option></select><Drop /></Combo>
                <Combo $w={42}><select aria-label="Font size"><option>12</option></select><Drop /></Combo>
                <Cluster>
                  <SizeTool aria-label="Grow font"><Glyph $bold $size={17}>A</Glyph><SizeArrow /></SizeTool>
                  <SizeTool aria-label="Shrink font"><Glyph $bold $size={14}>A</Glyph><SizeArrow down /></SizeTool>
                </Cluster>
                <Cluster><Tool $w={22} aria-label="Clear formatting"><ClearIcon /></Tool></Cluster>
              </Row>
              <Row>
                <Cluster>
                  <Tool $w={22}><Glyph $bold>B</Glyph></Tool>
                  <Tool $w={23}><Glyph $bold $italic>I</Glyph></Tool>
                  <Tool $w={37}><Glyph $bold $line="underline">U</Glyph>&nbsp;<Drop /></Tool>
                  <Tool $w={23}><Glyph $sans $line="line-through" $size={11}>abc</Glyph></Tool>
                  <Tool $w={23}><Glyph $bold>x<sub>2</sub></Glyph></Tool>
                  <Tool $w={23}><Glyph $bold>x<sup>2</sup></Glyph></Tool>
                  <Tool $w={30}><Glyph $bold $size={13}>Aa</Glyph><Drop /></Tool>
                </Cluster>
                <Cluster>
                  <Tool $w={32} aria-label="Highlight"><HighlightIcon /><Drop /></Tool>
                  <Tool $w={32} aria-label="Font color"><FontColorIcon /><Drop /></Tool>
                </Cluster>
              </Row>
            </Rows>
          </GroupBody>
          <GroupLabel><span>Font</span><Launcher /></GroupLabel>
        </Group>

        <Group $w={209}>
          <GroupBody>
            <Rows>
              <Row>
                <Cluster>
                  <Tool $w={32} aria-label="Bullets"><BulletsIcon /><Drop /></Tool>
                  <Tool $w={33} aria-label="Numbering"><NumbersIcon /><Drop /></Tool>
                  <Tool $w={31} aria-label="Multilevel list"><LevelsIcon /><Drop /></Tool>
                </Cluster>
                <Cluster>
                  <Tool aria-label="Decrease indent"><IndentIcon /></Tool>
                  <Tool aria-label="Increase indent"><IndentIcon right /></Tool>
                </Cluster>
                <Cluster><Tool aria-label="Sort"><SortIcon /></Tool></Cluster>
                <Cluster><Tool $w={22}><Glyph $size={18}>¶</Glyph></Tool></Cluster>
              </Row>
              <Row>
                <Cluster>
                  <Tool $w={22} $on aria-label="Align left"><AlignIcon kind="l" /></Tool>
                  <Tool $w={23} aria-label="Center"><AlignIcon kind="c" /></Tool>
                  <Tool $w={23} aria-label="Align right"><AlignIcon kind="r" /></Tool>
                  <Tool $w={22} aria-label="Justify"><AlignIcon kind="j" /></Tool>
                </Cluster>
                <Cluster><Tool $w={29} aria-label="Line spacing"><SpacingIcon /><Drop /></Tool></Cluster>
                <Cluster>
                  <Tool $w={32} aria-label="Shading"><BucketIcon /><Drop /></Tool>
                  <Tool $w={32} aria-label="Borders"><BordersIcon /><Drop /></Tool>
                </Cluster>
              </Row>
            </Rows>
          </GroupBody>
          <GroupLabel><span>Paragraph</span><Launcher /></GroupLabel>
        </Group>

        <Group>
          <GroupBody>
            <Gallery>
              <Cells>
                {STYLES.map((s, i) => (
                  <Cell key={s.name} $on={i === 0}>
                    <Sample $font={s.font} $color={s.color}>{s.text}</Sample>
                    <CellName>{s.name}</CellName>
                  </Cell>
                ))}
              </Cells>
              <GalleryScroll>
                <button aria-label="Scroll up"><Drop up /></button>
                <button aria-label="Scroll down"><Drop /></button>
                <button aria-label="More styles"><svg width="7" height="6"><path d="M0 0H7V1H0ZM1 3H6L3.500 6Z" fill="#4a74b4" /></svg></button>
              </GalleryScroll>
            </Gallery>
            <BigButton $w={50}>
              <ChangeStylesIcon />
              <Caption>Change<br />Styles <Drop /></Caption>
            </BigButton>
          </GroupBody>
          <GroupLabel><span>Styles</span><Launcher /></GroupLabel>
          <ContextMenu />
          <Marker $x={15} $y={10} $size={56}>1</Marker>
          <Marker $x={143} $y={54} $size={39}>2</Marker>
        </Group>

        <Group $w={73}>
          <GroupBody>
            <Stack $pad={6}>
              <RowButton $icon={19}><FindIcon />Find <Drop /></RowButton>
              <RowButton $icon={19}><ReplaceIcon />Replace</RowButton>
              <RowButton $icon={19}><SelectIcon />Select <Drop /></RowButton>
            </Stack>
          </GroupBody>
          <GroupLabel><span>Editing</span></GroupLabel>
        </Group>
      </Ribbon>

      <Workspace>
        <Corner>
          <PlainButton aria-label="Tab selector">
            <svg width="24" height="23" viewBox="0 0 24 23">
              <rect x=".5" y=".5" width="23" height="22" fill="#a9c5ee" stroke="#3f6fc4" />
              <rect x="5.500" y="4.500" width="14" height="14" fill="#dce9fb" stroke="#3f6fc4" />
              <path d="M10 9H12V13H16V15H10Z" fill="#1f2f55" />
            </svg>
          </PlainButton>
        </Corner>
        <TopRuler><HorizontalRuler /></TopRuler>
        <ScrollColumn>
          <SplitHandle />
          <RulerToggle aria-label="View ruler">
            <svg width="12" height="12" viewBox="0 0 12 12" fill="#fff" stroke="#333">
              <path d="M1.500 1.500H5.500V3.500H10.500V9.500H7.500V10.500L5.500 9.500H3.500L1.500 8.500Z" />
              <path d="M4 4L5 6M7 5L8 7" stroke="#3f6fc4" />
            </svg>
          </RulerToggle>
          <Track>
            <Arrow aria-label="Scroll up"><svg width="9" height="5"><path d="M0 5L4.500 0L9 5Z" fill="#2c3f74" /></svg></Arrow>
            <Thumb><svg width="8" height="8"><path d="M0 .5H8M0 3H8M0 5.500H8M0 7.500H8" stroke="#5a6f8a" /></svg></Thumb>
            <Spacer />
            <Arrow aria-label="Scroll down"><svg width="9" height="5"><path d="M0 0H9L4.500 5Z" fill="#2c3f74" /></svg></Arrow>
          </Track>
          <Browse>
            <PageArrow />
            <PlainButton aria-label="Browse object"><svg width="7" height="7"><circle cx="3.500" cy="3.500" r="3" fill="#ccc" stroke="#222" /></svg></PlainButton>
            <PageArrow down />
          </Browse>
        </ScrollColumn>
        <SideRuler><VerticalRuler /></SideRuler>
        <Desk>
          <Swoosh width="306" height="118" viewBox="0 0 306 118">
            <path d="M0 0H306Q120 45 0 116Z" fill="#9db9e2" />
            <path d="M0 116Q120 45 306 0" fill="none" stroke="#a9c4ec" />
            <path d="M0 0H304Q120 35 0 93Z" fill="#abc7ed" />
          </Swoosh>
          <Page aria-label="Document">
            <TextArea><Caret /></TextArea>
          </Page>
        </Desk>
      </Workspace>

      <StatusBar>
        <StatusItem $w={78}>Page: 1 of 1</StatusItem>
        <StatusItem $w={64}>Words: 0</StatusItem>
        <StatusItem $w={85}>English (U.S.)</StatusItem>
        <ZoomPart>
          <Views>
            <ViewButton $on aria-label="Print layout"><svg width="11" height="12"><path d="M.5.5H10.500V11.500H.5Z" fill="#fff" stroke="#6a5a3a" /><path d="M2 3H9M2 5H9M2 7H9M2 9H9" stroke="#777" /></svg></ViewButton>
            <ViewButton aria-label="Full screen reading"><svg width="12" height="12"><path d="M.5 1.500L6 2.500L11.500 1.500V9.500L6 11L.5 9.500ZM6 2.500V11" fill="#fff" stroke="#555" /><path d="M2 4H5M2 6H5M2 8H5M7 4H10M7 6H10M7 8H10" stroke="#777" /></svg></ViewButton>
            <ViewButton aria-label="Web layout"><svg width="13" height="12"><path d="M.5.5H9.500V9.500H.5Z" fill="#fff" stroke="#666" /><path d="M2 3H8M2 5H8M2 7H6" stroke="#777" /><circle cx="9.500" cy="8.500" r="3" fill="#2f7fa0" /></svg></ViewButton>
            <ViewButton aria-label="Outline"><svg width="10" height="11"><path d="M0 .5H8M2 2.500H8M3 4.500H9M2 6.500H9M4 8.500H10M2 10.500H9" stroke="#6a7a94" strokeDasharray="2 1" /></svg></ViewButton>
            <ViewButton aria-label="Draft"><svg width="10" height="11"><path d="M0 1.500H10M0 4H10M0 6.500H10M0 9H10" stroke="#555f74" /></svg></ViewButton>
          </Views>
          <Percent>100%</Percent>
          <ZoomSlider>
            <PlainButton aria-label="Zoom out"><svg width="16" height="16"><circle cx="8" cy="8" r="7" fill="#dfe9f7" stroke="#46659a" /><path d="M4 8H12" stroke="#46597d" strokeWidth="2" /></svg></PlainButton>
            <input type="range" aria-label="Zoom" min="0" max="100" defaultValue="49" />
            <PlainButton aria-label="Zoom in"><svg width="16" height="16"><circle cx="8" cy="8" r="7" fill="#dfe9f7" stroke="#46659a" /><path d="M4 8H12M8 4V12" stroke="#46597d" strokeWidth="2" /></svg></PlainButton>
          </ZoomSlider>
        </ZoomPart>
      </StatusBar>

      <Taskbar>
        <Start>
          <svg width="19" height="18" viewBox="0 0 19 18">
            <path d="M3 2.500C5 1 7 1 9 2.500L7.500 8C5.500 6.500 3.500 6.500 1.500 8Z" fill="#e8542a" />
            <path d="M10 3C12 4.500 15 4.500 17.500 3L16 8.500C13.500 10 11 9.500 8.700 8.300Z" fill="#86c440" />
            <path d="M1.300 9C3.300 7.500 5.500 7.500 7.200 9L5.800 14.500C4 13 2 13 0 14.500Z" fill="#5d8ff0" />
            <path d="M8.300 9.500C10.500 11 13 11 15.600 9.500L14 15.500C11.500 17 9 16.500 6.700 15Z" fill="#f8c830" />
          </svg>
          start
        </Start>
        <Tasks>
          <Task>
            <svg width="16" height="16" viewBox="0 0 17 16"><circle cx="8.500" cy="8" r="7.500" fill="#e8701a" /><circle cx="9" cy="6.500" r="4.500" fill="#3b62a8" /><path d="M1 5C3 7 4 5 7 6C6 9 9 10 12 9C11 13 4 13 2 9Z" fill="#f7a830" /></svg>
            Blogger: Dunia Belaja...
          </Task>
          <Task>
            <svg width="16" height="14" viewBox="0 0 16 14"><path d="M.5 12.500V1.500H6L7.500 3.500H14.500V12.500Z" fill="#e8c45a" stroke="#a8842a" /><path d="M.5 13L3 6.500H15.500L13.500 13Z" fill="#fdf0a8" stroke="#b8943a" /></svg>
            Downloads
          </Task>
          <Task>
            <svg width="16" height="16" viewBox="0 0 17 16"><path d="M1 1L6 0L16 3V5L2 5Z" fill="#b02a5a" /><path d="M2 5H16V8H2Z" fill="#c02a3a" /><path d="M2 9H16V11H2Z" fill="#eee" /><path d="M2 8.500H16V12H2Z" fill="#2f8a3a" /><path d="M2 12.500H16V15.500H2Z" fill="#3a3aa0" /><path d="M1 1V15M3 7.500H15M3 11.500H15M3 15H15" stroke="#f2e9d0" /><path d="M7 1V15" stroke="#caa53a" strokeWidth="1.500" /></svg>
            1000$-per-Bulan-dari...
          </Task>
          <Task $on>
            <svg width="16" height="16" viewBox="0 0 17 16"><path d="M5 1H14L16 3V15H5Z" fill="#f1f5fb" stroke="#8a9ab8" /><path d="M11 5H15M11 8H15M11 11H15" stroke="#8a9ab8" /><path d="M1.500 1.500H10.500V12.500H1.500Z" fill="#e8eefa" stroke="#6c88c4" /><path d="M3 4L4.500 10L6 5.500L7.500 10L9 4" stroke="#2f56a8" strokeWidth="1.400" fill="none" /></svg>
            Document1 - Microsof...
          </Task>
          <Task>
            <svg width="16" height="16" viewBox="0 0 16 16"><rect width="16" height="16" fill="#123a6e" /><text x="3" y="11" fontSize="8" fontWeight="700" fontFamily="Liberation Sans, sans-serif" fill="#d8ecff">Ps</text></svg>
            Adobe Photoshop CS3
          </Task>
        </Tasks>
        <Lang>EN</Lang>
        <Tray>
          <PlainButton aria-label="Show hidden icons"><svg width="18" height="18"><circle cx="9" cy="9" r="8.500" fill="#2f8ff0" stroke="#8fd0ff" /><path d="M11 5L7 9L11 13" stroke="#fff" strokeWidth="2" fill="none" /></svg></PlainButton>
          <svg width="16" height="16"><path d="M8 1L14 3C14 9 12 13 8 15C4 13 2 9 2 3Z" fill="#f9d33a" stroke="#8a6a10" /><path d="M8 4V9M8 10.500V12.500" stroke="#333" strokeWidth="2" /></svg>
          <svg width="16" height="16"><path d="M5 9L12 7L15 12L8 15Z" fill="#b8bcc4" stroke="#555" /><path d="M2 2L7 4L6 6L10 8L5 9L4 5Z" fill="#4fbf3a" stroke="#257a1c" strokeWidth=".6" /></svg>
          <svg width="16" height="16"><path d="M8 1L14 3C14 9 12 13 8 15C4 13 2 9 2 3Z" fill="#d8232f" stroke="#eee" /><path d="M5.500 5L10.500 10.500M10.500 5L5.500 10.500" stroke="#fff" strokeWidth="2" /></svg>
          <svg width="16" height="16"><path d="M1 8H11V15H1Z" fill="#e3c568" stroke="#6a5418" /><path d="M3 5H8V11H3Z" fill="#eee" stroke="#555" /><path d="M7 1H15V10H7Z" fill="#fff" stroke="#234" /><path d="M11 2.500V4M11 5V9" stroke="#1c3fa0" strokeWidth="2" /></svg>
          <svg width="16" height="16"><rect width="16" height="16" rx="1" fill="#e0242c" /><path d="M2 9C3 3 9 1 13 5C10 5 6 6 2 9Z" fill="#fff" /><path d="M8 6L12 12C13 14 15 13 14 11" fill="none" stroke="#fff" strokeWidth="1.300" /></svg>
          <svg width="16" height="16"><circle cx="8" cy="8" r="7" fill="#d9dccb" stroke="#77796a" /><path d="M3 7H13V12H3Z" fill="#fff" stroke="#555" strokeWidth=".8" /><path d="M5 4H11" stroke="#888" strokeWidth="2" /></svg>
          <svg width="16" height="16"><path d="M1 10L7 3L15 6L14 11L8 14Z" fill="#222" /><path d="M7 3L10 0L15 2L13 6Z" fill="#fff" stroke="#333" /><path d="M0 13L5 9L7 11L2 16Z" fill="#d83ac0" /><path d="M3 13L6 11" stroke="#f8e030" strokeWidth="2" /></svg>
          <svg width="16" height="16"><path d="M7.500 0L15.500 15H.5Z" fill="#1fa82a" /><path d="M8 6L11 12H6Z" fill="#0f5e18" /><path d="M7.500 1L2 14" stroke="#6fe070" strokeWidth="1.500" /></svg>
          <time>12:43</time>
        </Tray>
      </Taskbar>
    </Shell>
  );
}
